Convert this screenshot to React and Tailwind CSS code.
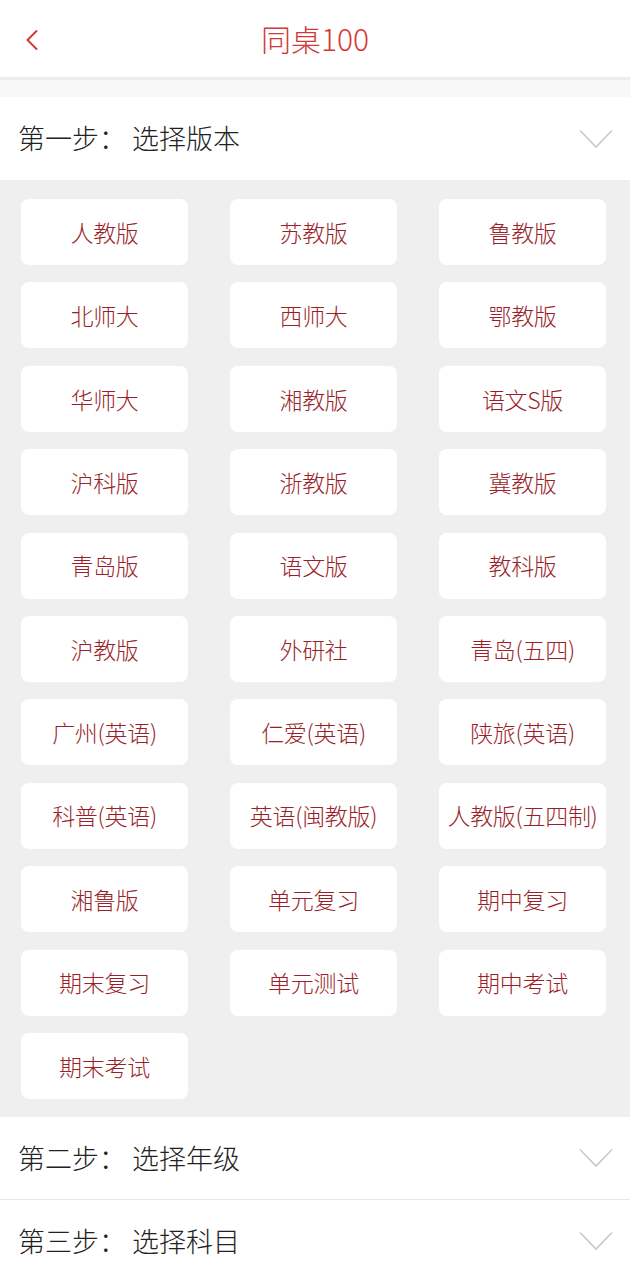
import { ChevronLeft } from "lucide-react";

const editions = [
  "人教版", "苏教版", "鲁教版",
  "北师大", "西师大", "鄂教版",
  "华师大", "湘教版", "语文S版",
  "沪科版", "浙教版", "冀教版",
  "青岛版", "语文版", "教科版",
  "沪教版", "外研社", "青岛(五四)",
  "广州(英语)", "仁爱(英语)", "陕旅(英语)",
  "科普(英语)", "英语(闽教版)", "人教版(五四制)",
  "湘鲁版", "单元复习", "期中复习",
  "期末复习", "单元测试", "期中考试",
  "期末考试",
];

function DownArrow() {
  return (
    <svg width="34" height="20" viewBox="0 0 34 20" fill="none" className="text-[#c8c8c8]">
      <path d="M1 1.5 L17 18 L33 1.5" stroke="currentColor" strokeWidth="1.6" />
    </svg>
  );
}

function StepRow({ label, title, border }) {
  return (
    <div className={`flex h-[83px] items-center justify-between bg-white pl-[18px] pr-[17px] ${border ? "border-b border-[#e6e6e6]" : ""}`}>
      <div className="flex items-center text-[27px] font-light text-[#222]">
        <span>{label}</span>
        <span className="ml-[6px]">{title}</span>
      </div>
      <DownArrow />
    </div>
  );
}

export default function App() {
  return (
    <div className="min-h-[1280px] w-[630px] bg-white font-['Noto_Sans_CJK_SC','Noto_Sans',sans-serif]">
      {/* header */}
      <div className="relative flex h-[80px] items-center justify-center border-b-[3px] border-[#ececec] bg-white">
        <ChevronLeft className="absolute left-[14px] top-[22px] h-[36px] w-[36px] text-[#d0393a]" strokeWidth={1.3} />
        <span className="text-[30px] font-light text-[#d0393a]">同桌100</span>
      </div>
      <div className="h-[17px] bg-[#f8f8f8]" />

      <StepRow label="第一步：" title="选择版本" />

      <div className="grid grid-cols-3 gap-x-[42px] gap-y-[17.4px] bg-[#f0eff0] pl-[21px] pr-[24px] pt-[19px] pb-[18px]">
        {editions.map((e) => (
          <div
            key={e}
            className="flex h-[66px] items-center justify-center whitespace-nowrap rounded-[8px] bg-white text-[23px] font-light tracking-[-0.3px] text-[#9a1f2a]"
          >
            {e}
          </div>
        ))}
      </div>

      <StepRow label="第二步：" title="选择年级" border />
      <StepRow label="第三步：" title="选择科目" />
    </div>
  );
}
